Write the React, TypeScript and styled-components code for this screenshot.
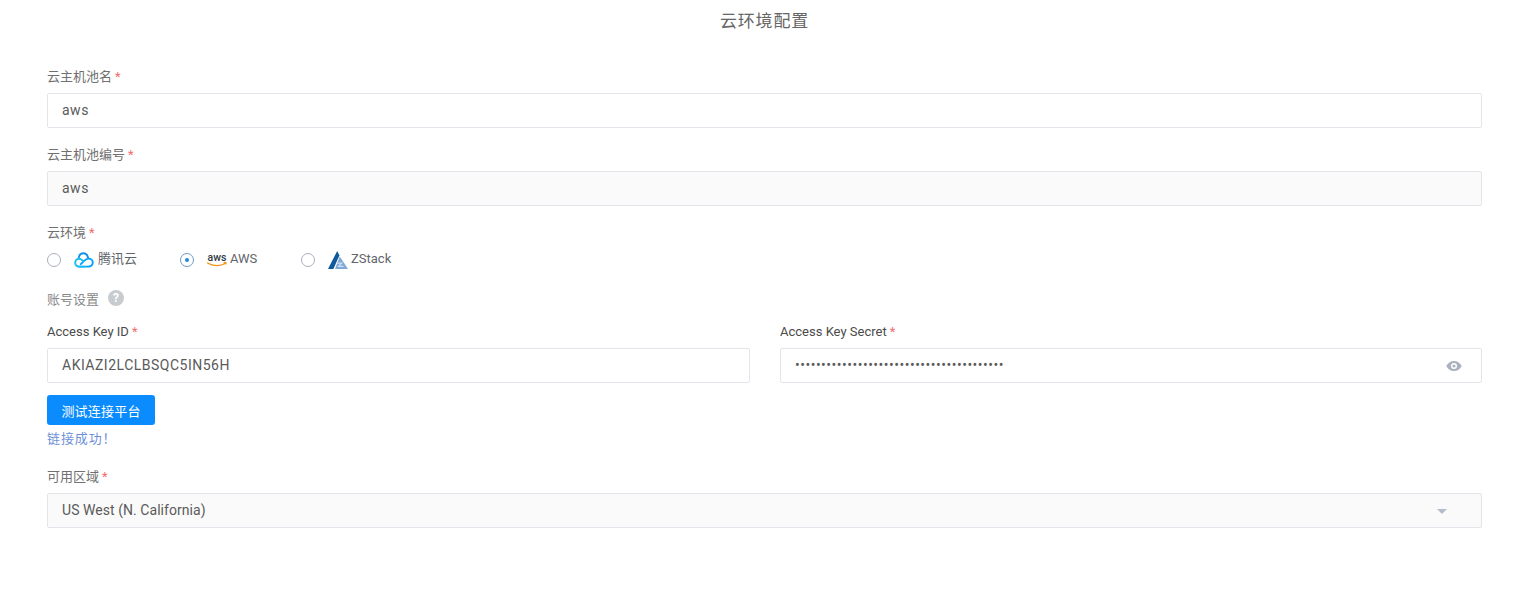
import React from "react";
import styled, { createGlobalStyle } from "styled-components";

const GlobalStyle = createGlobalStyle`
  html, body {
    margin: 0;
    padding: 0;
    background: #fff;
    font-family: Roboto, "Noto Sans CJK SC", sans-serif;
    color: #606266;
  }
`;

const Page = styled.div`
  width: 1524px;
  height: 589px;
  overflow: hidden;
  box-sizing: border-box;
  padding: 0 42px 0 47px;
`;

const Title = styled.h1`
  margin: 0;
  height: 60px;
  padding-top: 10px;
  box-sizing: border-box;
  font-size: 17px;
  line-height: 22px;
  font-weight: 400;
  text-align: center;
  letter-spacing: 0.8px;
  color: #666;
`;

const Field = styled.div`
  margin-bottom: 10px;
`;

const Label = styled.label<{ $dark?: boolean }>`
  display: block;
  height: 33px;
  line-height: 33px;
  font-size: 13px;
  color: ${(p) => (p.$dark ? "#4a4a4a" : "#707070")};
`;

const Star = styled.span`
  color: #f56c6c;
  margin-left: 3px;
`;

const InputBox = styled.div<{ $disabled?: boolean }>`
  position: relative;
  display: flex;
  align-items: center;
  height: 35px;
  box-sizing: border-box;
  padding: 0 14px 2px;
  border: 1px solid #e2e5ea;
  border-radius: 2px;
  background: ${(p) => (p.$disabled ? "#fafafa" : "#fff")};
  font-size: 14px;
  letter-spacing: 0.5px;
  color: #5a5a5a;
`;

const SelectText = styled.span`
  letter-spacing: 0.05px;
`;

const Dots = styled.span`
  font-size: 14px;
  letter-spacing: 0.5px;
`;

const TrailingIcon = styled.span`
  position: absolute;
  right: 19px;
  top: 50%;
  transform: translateY(-50%);
  display: flex;
`;

const Caret = styled.span`
  position: absolute;
  right: 34px;
  top: 15px;
  border-left: 5px solid transparent;
  border-right: 5px solid transparent;
  border-top: 5px solid #b4bccc;
`;

const RadioRow = styled.div`
  display: flex;
  align-items: center;
  height: 22px;
`;

const RadioItem = styled.div<{ $width: number }>`
  display: flex;
  align-items: center;
  width: ${(p) => p.$width}px;
  font-size: 13px;
  line-height: 20px;
  color: #62656a;
`;

const RadioCircle = styled.span<{ $checked?: boolean }>`
  position: relative;
  width: 14px;
  height: 14px;
  flex: none;
  box-sizing: border-box;
  border-radius: 50%;
  border: 1px solid ${(p) => (p.$checked ? "#6d9ac4" : "#a9b0ba")};
  margin-right: 13px;

  &::after {
    content: "";
    display: ${(p) => (p.$checked ? "block" : "none")};
    position: absolute;
    left: 4px;
    top: 4px;
    width: 4px;
    height: 4px;
    border-radius: 50%;
    background: #1f88e0;
  }
`;

const Logo = styled.svg<{ $gap: number }>`
  flex: none;
  margin-right: ${(p) => p.$gap}px;
`;

const RadioText = styled.span`
  position: relative;
  top: -1px;
`;

const SectionLabel = styled.div`
  display: flex;
  align-items: center;
  gap: 9px;
  height: 34px;
  margin-top: 10px;
  font-size: 13px;
  color: #8a8a8a;
`;

const HelpIcon = styled.span`
  width: 16px;
  height: 16px;
  border-radius: 50%;
  background: #c9cccf;
  color: #fff;
  font-size: 12px;
  font-weight: 700;
  line-height: 16px;
  text-align: center;
`;

const TwoCols = styled.div`
  display: grid;
  grid-template-columns: 703px 702px;
  column-gap: 30px;
`;

const TestButton = styled.button`
  display: block;
  width: 108px;
  height: 30px;
  margin-top: 2px;
  padding: 0;
  border: none;
  border-radius: 3px;
  background: #0a8cff;
  color: #fff;
  font-family: inherit;
  font-size: 13px;
  letter-spacing: 0.2px;
`;

const Success = styled.div`
  height: 28px;
  margin-bottom: 7px;
  line-height: 28px;
  font-size: 13px;
  letter-spacing: 0.9px;
  color: #6d8fd8;
`;

const TencentLogo = () => (
  <Logo $gap={4} width="20" height="16" viewBox="0 0 20 16" fill="none">
    <path
      d="M5 14.6h9.4c2.4 0 4.4-1.8 4.4-4s-2-4-4.4-4c-2 0-3.2 1.2-4.6 2.6l-3 3"
      stroke="#00a3ff"
      strokeWidth="1.9"
      strokeLinecap="round"
    />
    <path
      d="M14.2 6.2C13.6 3.2 11.8 1.2 9.4 1.2 7 1.2 5.2 3 4.8 5.6"
      stroke="#1592e6"
      strokeWidth="1.9"
      strokeLinecap="round"
    />
    <path
      d="M10 14.6H5c-2.2 0-3.8-1.6-3.8-3.8S3 6.8 5 6.8c1.6 0 2.8.8 4.4 2.4"
      stroke="#19bdf0"
      strokeWidth="1.9"
      strokeLinecap="round"
    />
  </Logo>
);

const AwsLogo = () => (
  <Logo $gap={3} width="20" height="16" viewBox="0 0 20 16" fill="none">
    <text x="10" y="9" textAnchor="middle" fontFamily="Roboto, sans-serif" fontSize="10.5" fontWeight="500" fill="#2f3a45">
      aws
    </text>
    <path d="M0.5 11c5.5 3.4 13 3.4 18 .2" stroke="#f29111" strokeWidth="1.3" strokeLinecap="round" />
    <path d="M16.6 10.6l2.6-.2-.6 2.2" stroke="#f29111" strokeWidth="1" fill="none" />
  </Logo>
);

const ZStackLogo = () => (
  <Logo $gap={3} width="20" height="18" viewBox="0 0 20 18">
    <path d="M0 18L9.2 0l2.2 4.4L5.4 18z" fill="#0e5a9a" />
    <path d="M11.8 5.4L20 18H7z" fill="#7fa9d6" />
    <path d="M9.6 11.5h5.4l-3 3.2h3.6v1.2H9.2l3-3.2H9.2z" fill="#cfe0f2" />
  </Logo>
);

const EyeIcon = () => (
  <svg width="16" height="11" viewBox="0 0 16 11">
    <path
      fillRule="evenodd"
      d="M8 .5C4.6.5 1.7 2.5.3 5.5 1.7 8.5 4.6 10.5 8 10.5s6.3-2 7.7-5C14.3 2.5 11.4.5 8 .5zm0 8a3 3 0 1 1 0-6 3 3 0 0 1 0 6zm0-1.4a1.6 1.6 0 1 0 0-3.2 1.6 1.6 0 0 0 0 3.2z"
      fill="#aab1bf"
    />
  </svg>
);

const App = () => {
  return (
    <Page>
      <GlobalStyle />
      <Title>云环境配置</Title>

      <Field>
        <Label>
          云主机池名<Star>*</Star>
        </Label>
        <InputBox>aws</InputBox>
      </Field>

      <Field>
        <Label>
          云主机池编号<Star>*</Star>
        </Label>
        <InputBox $disabled>aws</InputBox>
      </Field>

      <Label>
        云环境<Star>*</Star>
      </Label>
      <RadioRow>
        <RadioItem $width={133}>
          <RadioCircle />
          <TencentLogo />
          <RadioText>腾讯云</RadioText>
        </RadioItem>
        <RadioItem $width={121}>
          <RadioCircle $checked />
          <AwsLogo />
          <RadioText>AWS</RadioText>
        </RadioItem>
        <RadioItem $width={120}>
          <RadioCircle />
          <ZStackLogo />
          <RadioText>ZStack</RadioText>
        </RadioItem>
      </RadioRow>

      <SectionLabel>
        账号设置
        <HelpIcon>?</HelpIcon>
      </SectionLabel>

      <TwoCols>
        <Field>
          <Label $dark>
            Access Key ID<Star>*</Star>
          </Label>
          <InputBox>AKIAZI2LCLBSQC5IN56H</InputBox>
        </Field>
        <Field>
          <Label $dark>
            Access Key Secret<Star>*</Star>
          </Label>
          <InputBox>
            <Dots>{"•".repeat(40)}</Dots>
            <TrailingIcon>
              <EyeIcon />
            </TrailingIcon>
          </InputBox>
        </Field>
      </TwoCols>

      <TestButton>测试连接平台</TestButton>
      <Success>链接成功！</Success>

      <Field>
        <Label>
          可用区域<Star>*</Star>
        </Label>
        <InputBox $disabled>
          <SelectText>US West (N. California)</SelectText>
          <Caret />
        </InputBox>
      </Field>
    </Page>
  );
};

export default App;
